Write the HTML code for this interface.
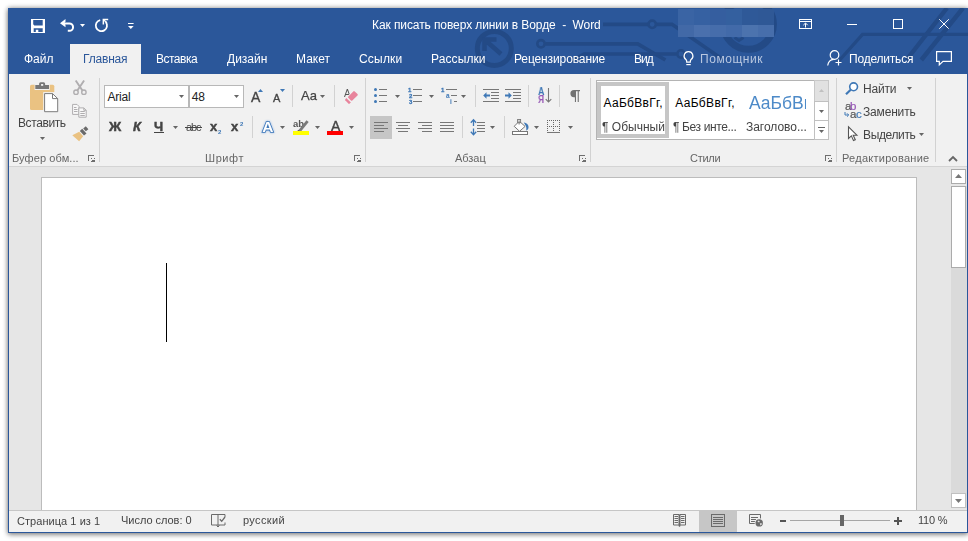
<!DOCTYPE html>
<html lang="ru"><head><meta charset="utf-8"><title>Как писать поверх линии в Ворде - Word</title>
<style>
*{box-sizing:border-box;margin:0;padding:0}
html,body{width:968px;height:541px;overflow:hidden;background:#fff}
body{position:relative;font:12px/16px "Liberation Sans",sans-serif;color:#444}
#app,#app div,#app section,#app header,#app footer,#app nav,#app main{position:absolute}
#app{left:0;top:0;width:968px;height:541px}
#frame{left:8px;top:8px;width:960px;height:525px;background:#f1f1f1;box-shadow:0 0 5px rgba(0,0,0,.4),0 2px 5px rgba(0,0,0,.3)}
.t{position:absolute;white-space:pre;display:block;will-change:transform}
.lcd{will-change:auto}
.i{position:absolute;display:block;overflow:visible}
.sep{width:1px;background:#d2d2d2}
</style></head>
<body><div id="app">
<div id="frame"></div>
<header id="titlebar" style="left:0;top:0;width:968px;height:74px">
<div class="bluebar" style="position:absolute;left:8px;top:8px;width:960px;height:66px;background:#2b579a;"></div>
<svg class="i" style="left:8px;top:8px;overflow:hidden" width="960" height="66" viewBox="8 8 960 66"><circle cx="494.300" cy="48.400" r="17" fill="none" stroke="#234a86" stroke-width="5"/><path d="M485 40l16 14M484.500 51V39.500h12" fill="none" stroke="#234a86" stroke-width="4.500"/><circle cx="541" cy="43.800" r="3.700" fill="none" stroke="#234a86" stroke-width="2.600"/><path d="M545.500 43.800H637.700L665.400 60" fill="none" stroke="#234a86" stroke-width="3.700"/><path d="M603 24.300H648M656.500 24.300H672L722 59" fill="none" stroke="#234a86" stroke-width="3.700"/><circle cx="652.200" cy="24.300" r="3.700" fill="none" stroke="#234a86" stroke-width="2.600"/><path d="M572 61l12-7H676.500" fill="none" stroke="#234a86" stroke-width="3.500"/><circle cx="681" cy="54" r="3.700" fill="none" stroke="#234a86" stroke-width="2.600"/><circle cx="748.400" cy="24.300" r="25" fill="none" stroke="#234a86" stroke-width="7"/><path d="M734.500 37.500l4.500 3 4.500-3" fill="none" stroke="#234a86" stroke-width="3"/><path d="M968 34.400H862.500L838 62" fill="none" stroke="#234a86" stroke-width="3.300"/><path d="M947 8L906.400 60M963 8L921.300 60" fill="none" stroke="#234a86" stroke-width="4.400"/></svg>
<div style="position:absolute;left:678px;top:9px;width:16px;height:16px;background:#3a64a4;"></div>
<div style="position:absolute;left:678px;top:25px;width:16px;height:12px;background:#4269a7;"></div>
<div style="position:absolute;left:694px;top:9px;width:16px;height:16px;background:#3661a2;"></div>
<div style="position:absolute;left:694px;top:25px;width:16px;height:12px;background:#4a70ad;"></div>
<div style="position:absolute;left:710px;top:9px;width:16px;height:16px;background:#355e9f;"></div>
<div style="position:absolute;left:710px;top:25px;width:16px;height:12px;background:#466dab;"></div>
<div style="position:absolute;left:726px;top:9px;width:16px;height:16px;background:#34609f;"></div>
<div style="position:absolute;left:726px;top:25px;width:16px;height:12px;background:#426aa9;"></div>
<div style="position:absolute;left:742px;top:9px;width:16px;height:16px;background:#2f5998;"></div>
<div style="position:absolute;left:742px;top:25px;width:16px;height:12px;background:#4c73ae;"></div>
<div style="position:absolute;left:758px;top:9px;width:16px;height:16px;background:#2f5896;"></div>
<div style="position:absolute;left:758px;top:25px;width:16px;height:12px;background:#476eab;"></div>
<svg class="i" style="left:31px;top:19px" width="14" height="14" viewBox="0 0 14 14"><path fill-rule="evenodd" fill="#fff" d="M0 0h14v14H0zM2.200 .9v4.300l1.100 1.300h8.400V.9zM2.700 9.200v3.900h2.100v-2.400h2.500v2.400h4.400V9.200z"/></svg>
<svg class="i" style="left:60px;top:18px" width="15" height="15" viewBox="0 0 15 15"><path d="M3 5.500H9.400A3.650 3.650 0 0 1 9.400 12.800H7.800" fill="none" stroke="#fff" stroke-width="2"/><path d="M0 5.200L5.500 1.100v2.600L4.200 5.200l1.300 1.500v2.600z" fill="#fff"/></svg>
<svg class="i" style="left:80px;top:24px" width="5" height="3" viewBox="0 0 5 3"><path d="M0 0h5L2.5 3z" fill="#fff"/></svg>
<svg class="i" style="left:95px;top:18px" width="14" height="15" viewBox="0 0 14 15"><path d="M10.700 4A5.600 5.600 0 1 1 5.200 2.100" fill="none" stroke="#fff" stroke-width="1.800"/><path d="M7.600 .8h5.600v1.500h-4.100v4.100h-1.500z" fill="#fff"/><path d="M8.500 1.800l3.500 3" stroke="#fff" stroke-width="1.300" fill="none"/></svg>
<svg class="i" style="left:127.7px;top:23px" width="6" height="6" viewBox="0 0 6 6"><rect x="0" y="0" width="5.600" height="1" fill="#fff"/><path d="M0 3h5.600L2.800 6z" fill="#fff"/></svg>
<span class="t" style="left:371.50px;top:17px;color:#fff;letter-spacing:-0.090px;">Как писать поверх линии в Ворде  -  Word</span>
<svg class="i" style="left:799px;top:19px" width="13" height="10" viewBox="0 0 13 10"><rect x=".5" y=".5" width="12" height="9" fill="none" stroke="#fff"/><rect x="1" y="2" width="11" height="1" fill="#fff"/><path d="M6.5 8.5V4.3M4.3 6.2l2.2-2.2 2.2 2.2" fill="none" stroke="#fff" stroke-width="1"/></svg>
<div style="position:absolute;left:847px;top:24px;width:10px;height:1px;background:#fff;"></div>
<svg class="i" style="left:893px;top:19px" width="10" height="10" viewBox="0 0 10 10"><rect x=".5" y=".5" width="9" height="9" fill="none" stroke="#fff"/></svg>
<svg class="i" style="left:939px;top:19px" width="10" height="10" viewBox="0 0 10 10"><path d="M.3 .3l9.400 9.400M9.700 .3L.3 9.700" stroke="#fff" stroke-width="1" fill="none"/></svg>
<div class="tab-active" style="position:absolute;left:70px;top:44px;width:71px;height:30px;background:#f1f1f1;"></div>
<span class="t" style="left:23.50px;top:51px;color:#fff;">Файл</span>
<span class="t" style="left:82.50px;top:51px;color:#2b579a;letter-spacing:-0.180px;">Главная</span>
<span class="t" style="left:155.50px;top:51px;color:#fff;letter-spacing:-0.500px;">Вставка</span>
<span class="t" style="left:226.50px;top:51px;color:#fff;">Дизайн</span>
<span class="t" style="left:295.50px;top:51px;color:#fff;">Макет</span>
<span class="t" style="left:358.50px;top:51px;color:#fff;letter-spacing:0.200px;">Ссылки</span>
<span class="t" style="left:430.50px;top:51px;color:#fff;letter-spacing:0.096px;">Рассылки</span>
<span class="t" style="left:514.00px;top:51px;color:#fff;letter-spacing:-0.115px;">Рецензирование</span>
<span class="t" style="left:633.90px;top:51px;color:#fff;letter-spacing:-1.000px;">Вид</span>
<svg class="i" style="left:683px;top:51px" width="11" height="15" viewBox="0 0 11 15"><path d="M5.5.7a4.3 4.3 0 0 0-2.6 7.8c.5.5.8 1.100.8 1.900v.8h3.600v-.8c0-.8.300-1.400.8-1.900A4.300 4.300 0 0 0 5.500.700z" fill="none" stroke="#fff" stroke-width="1.2"/><rect x="3.3" y="13" width="4.4" height="1.200" fill="#fff"/></svg>
<span class="t" style="left:700.00px;top:51px;color:#b8c7e0;letter-spacing:0.546px;">Помощник</span>
<svg class="i" style="left:827px;top:50px" width="16" height="16" viewBox="0 0 16 16"><circle cx="7.500" cy="5" r="4.300" fill="none" stroke="#fff" stroke-width="1.200"/><path d="M.7 15.500c.5-3.600 2.800-5.800 6-6.100" fill="none" stroke="#fff" stroke-width="1.200"/><path d="M11.500 9.500v6M8.500 12.500h6" stroke="#fff" stroke-width="1.200" fill="none"/></svg>
<span class="t" style="left:848.80px;top:51px;color:#fff;letter-spacing:-0.200px;">Поделиться</span>
<svg class="i" style="left:936px;top:51px" width="16" height="15" viewBox="0 0 16 15"><path d="M.6.6h14.800v9.800H7L3.300 13.900V10.400H.6z" fill="none" stroke="#fff" stroke-width="1.200"/></svg>
</header>
<main id="ribbon" style="left:9px;top:74px;width:958px;height:92px;background:#f1f1f1"></main>
<div style="position:absolute;left:9px;top:166px;width:958px;height:1px;background:#d4d4d4;"></div>
<section class="grp" id="g-clip" style="left:9px;top:74px;width:90px;height:92px"></section>
<svg class="i" style="left:29px;top:81px" width="30" height="32" viewBox="0 0 30 32"><rect x="1" y="3.700" width="24.300" height="25.300" rx="1.600" fill="#eac282"/><rect x="5.600" y="3" width="15.100" height="6" fill="#f1f1f1"/><rect x="6.300" y="4" width="13.700" height="4" fill="#777"/><rect x="10.100" y="1.200" width="6" height="4" rx="1.500" fill="#777"/><rect x="12.100" y="3" width="2.100" height="1.800" fill="#f4f4f4"/><rect x="14.200" y="11.100" width="16" height="21" fill="#f1f1f1"/><path d="M15.600 12.600h7.900l5.200 5v13.100H15.600z" fill="#fff" stroke="#7a7a7a"/><path d="M23.500 12.600v5h5.200" fill="none" stroke="#7a7a7a"/></svg>
<span class="t" style="left:17.80px;top:115px;letter-spacing:-0.405px;">Вставить</span>
<svg class="i" style="left:40px;top:137px" width="5" height="3" viewBox="0 0 5 3"><path d="M0 0h5L2.5 3z" fill="#666"/></svg>
<svg class="i" style="left:72px;top:80px" width="16" height="16" viewBox="0 0 16 16"><path d="M3.700 .5l6.900 10.300M12.100 .5L5.200 10.800" stroke="#b0aeb0" stroke-width="1.900" fill="none"/><circle cx="4" cy="12.200" r="2.200" fill="none" stroke="#b0aeb0" stroke-width="1.400"/><circle cx="11.900" cy="12.200" r="2.200" fill="none" stroke="#b0aeb0" stroke-width="1.400"/></svg>
<svg class="i" style="left:72px;top:104px" width="16" height="15" viewBox="0 0 16 15"><path d="M.6 .4h4.400l2 2v8H.6z" fill="#f8f8f8" stroke="#b0aeb0"/><path d="M2 3.500h2.500M2 5.500h3.500M2 7.500h3.500" stroke="#b0aeb0" fill="none"/><path d="M6.800 3.900h5l2.400 2.400v6.900H6.800z" fill="#f8f8f8" stroke="#b0aeb0"/><path d="M11.800 3.900v2.400h2.400" fill="none" stroke="#b0aeb0"/><path d="M8.300 7.500h4.500M8.300 9.500h4.500M8.300 11.500h4.500" stroke="#b0aeb0" fill="none"/></svg>
<svg class="i" style="left:72px;top:126px" width="17" height="16" viewBox="0 0 17 16"><path d="M.3 9.300L7.200 5.700l4 4.600L7.100 15.200z" fill="#eac282"/><path d="M7.800 4.900l2.400-2.200 4.300 4.700-2.500 2.200z" fill="#6a6a6a"/><path d="M11.200 2.400l2.600-2.100 2.600 2.900-2.600 2.100z" fill="#6a6a6a"/></svg>
<span class="t" style="left:12.10px;top:150px;font-size:11px;color:#666;letter-spacing:0.097px;">Буфер обм...</span>
<svg class="i" style="left:88px;top:155px" width="8" height="8" viewBox="0 0 8 8"><path d="M0 0h6v1H1v5H0z" fill="#6e6e6e"/><path d="M3 3h1v1h3V3H6v1H4v1h3v2H3V6h1V5H4V4H3z" fill="#6e6e6e"/></svg>
<div class="sep" style="position:absolute;left:99px;top:78px;width:1px;height:84px;background:#d2d2d2;"></div>
<section class="grp" id="g-font" style="left:100px;top:74px;width:265px;height:92px"></section>
<div class="combo" style="position:absolute;left:104px;top:85px;width:85px;height:23px;background:#fff;border:1px solid #b8b8b8"></div>
<div class="combo" style="position:absolute;left:189px;top:85px;width:55px;height:23px;background:#fff;border:1px solid #b8b8b8"></div>
<div style="position:absolute;left:188px;top:85px;width:2px;height:23px;background:#b8b8b8;"></div>
<span class="t lcd" style="left:107.60px;top:89px;color:#222;letter-spacing:-0.258px;">Arial</span>
<svg class="i" style="left:179px;top:95px" width="5" height="3" viewBox="0 0 5 3"><path d="M0 0h5L2.5 3z" fill="#666"/></svg>
<span class="t lcd" style="left:191.70px;top:89px;color:#222;">48</span>
<svg class="i" style="left:234px;top:95px" width="5" height="3" viewBox="0 0 5 3"><path d="M0 0h5L2.5 3z" fill="#666"/></svg>
<span class="t" style="left:250.90px;top:89px;font-size:14px;-webkit-text-stroke:0.35px #444;">A</span>
<svg class="i" style="left:258px;top:89px" width="5" height="3" viewBox="0 0 5 3"><path d="M0 3h5L2.500 0z" fill="#3f78b6"/></svg>
<span class="t" style="left:273.40px;top:90px;font-size:11px;-webkit-text-stroke:0.35px #444;">A</span>
<svg class="i" style="left:280px;top:89px" width="5" height="3" viewBox="0 0 5 3"><path d="M0 0h5L2.500 3z" fill="#3f78b6"/></svg>
<div class="sep" style="position:absolute;left:292px;top:85px;width:1px;height:22px;background:#d2d2d2;"></div>
<span class="t" style="left:300.50px;top:88px;font-size:13px;-webkit-text-stroke:0.25px #444;">Aa</span>
<svg class="i" style="left:320px;top:95px" width="5" height="3" viewBox="0 0 5 3"><path d="M0 0h5L2.5 3z" fill="#666"/></svg>
<div class="sep" style="position:absolute;left:334px;top:85px;width:1px;height:22px;background:#d2d2d2;"></div>
<span class="t" style="left:344.40px;top:86px;font-size:10px;color:#555;">A</span>
<svg class="i" style="left:343px;top:88px" width="17" height="17" viewBox="0 0 17 17"><path d="M11 1.800l5.200 4.900-9.900 10.200-5.300-5.400z" fill="#f1f1f1"/><path d="M10.300 3.400a1 1 0 0 1 1.400 0l2.800 2.600a1 1 0 0 1 0 1.400L9.300 12.500a1 1 0 0 1-1.400 0L5.300 9.800a1 1 0 0 1 0-1.400z" fill="#e8849c"/><path d="M3.300 10.100l4.600 4.300-1.500 1.400q-.4.300-.8 0L2.200 12.200q-.3-.4 0-.8z" fill="#e8849c"/></svg>
<span class="t" style="left:109.20px;top:119px;font-size:13.5px;font-weight:700;-webkit-text-stroke:0.45px #444;">Ж</span>
<span class="t" style="left:132.50px;top:119px;font-size:13px;font-weight:700;font-style:italic;-webkit-text-stroke:0.45px #444;">К</span>
<span class="t" style="left:154.00px;top:119px;font-size:13px;font-weight:700;-webkit-text-stroke:0.45px #444;">Ч</span>
<div style="position:absolute;left:154px;top:132px;width:10px;height:1px;background:#444;"></div>
<svg class="i" style="left:173px;top:126px" width="5" height="3" viewBox="0 0 5 3"><path d="M0 0h5L2.5 3z" fill="#666"/></svg>
<span class="t" style="left:185.70px;top:119px;font-size:11px;letter-spacing:-1.064px;">abc</span>
<div style="position:absolute;left:185px;top:127px;width:17px;height:1px;background:#444;"></div>
<span class="t" style="left:209.70px;top:119px;font-size:13px;font-weight:700;-webkit-text-stroke:0.45px #444;">x</span>
<span class="t" style="left:218.10px;top:124px;font-size:6px;font-weight:700;color:#3f78b6;">2</span>
<span class="t" style="left:231.40px;top:119px;font-size:13px;font-weight:700;-webkit-text-stroke:0.45px #444;">x</span>
<span class="t" style="left:240.30px;top:116px;font-size:6px;font-weight:700;color:#3f78b6;">2</span>
<div class="sep" style="position:absolute;left:252px;top:116px;width:1px;height:22px;background:#d2d2d2;"></div>
<svg class="i" style="left:259px;top:117px" width="18" height="18" viewBox="0 0 18 18"><text x="8.900" y="15.300" text-anchor="middle" font-family="Liberation Sans,sans-serif" font-size="15.500" font-weight="700" fill="#fff" stroke="#3c76b8" stroke-width="1.700" paint-order="stroke" style="filter:drop-shadow(0 0 .8px #8fb4e3)">A</text></svg>
<svg class="i" style="left:280px;top:126px" width="5" height="3" viewBox="0 0 5 3"><path d="M0 0h5L2.5 3z" fill="#666"/></svg>
<span class="t" style="left:293.10px;top:116px;font-size:9.5px;font-weight:700;color:#555;">ab</span>
<svg class="i" style="left:293px;top:119px" width="17" height="17" viewBox="0 0 17 17"><path d="M5.800 10.800L13.500 1.200l2.200 1.700L8 12.500z" fill="#7a7a7a"/><path d="M3.800 12.300l2-1.500 2.200 1.700z" fill="#555"/><rect x="0" y="12" width="16" height="4" fill="#ffff00"/></svg>
<svg class="i" style="left:315px;top:126px" width="5" height="3" viewBox="0 0 5 3"><path d="M0 0h5L2.5 3z" fill="#666"/></svg>
<span class="t" style="left:331.20px;top:118px;font-size:14px;-webkit-text-stroke:0.4px #444;">A</span>
<div style="position:absolute;left:327px;top:131px;width:16px;height:4px;background:#ff0000;"></div>
<svg class="i" style="left:349px;top:126px" width="5" height="3" viewBox="0 0 5 3"><path d="M0 0h5L2.5 3z" fill="#666"/></svg>
<span class="t" style="left:205.20px;top:150px;font-size:11px;color:#666;letter-spacing:0.575px;">Шрифт</span>
<svg class="i" style="left:354px;top:155px" width="8" height="8" viewBox="0 0 8 8"><path d="M0 0h6v1H1v5H0z" fill="#6e6e6e"/><path d="M3 3h1v1h3V3H6v1H4v1h3v2H3V6h1V5H4V4H3z" fill="#6e6e6e"/></svg>
<div class="sep" style="position:absolute;left:365px;top:78px;width:1px;height:84px;background:#d2d2d2;"></div>
<section class="grp" id="g-para" style="left:366px;top:74px;width:224px;height:92px"></section>
<div class="btn-on" style="position:absolute;left:370px;top:116px;width:22px;height:23px;background:#c6c6c6;"></div>
<svg class="i" style="left:0;top:0" width="968" height="170" viewBox="0 0 968 170"><circle cx="375.500" cy="89.5" r="1.500" fill="#3f78b6"/><rect x="379" y="89" width="8" height="1" fill="#777"/><circle cx="375.500" cy="95.5" r="1.500" fill="#3f78b6"/><rect x="379" y="95" width="8" height="1" fill="#777"/><circle cx="375.500" cy="101.5" r="1.500" fill="#3f78b6"/><rect x="379" y="101" width="8" height="1" fill="#777"/><rect x="413" y="89" width="9" height="1" fill="#777"/><rect x="413" y="95" width="9" height="1" fill="#777"/><rect x="413" y="101" width="9" height="1" fill="#777"/><rect x="446" y="89" width="11" height="1" fill="#777"/><rect x="451" y="95" width="6" height="1" fill="#777"/><rect x="454" y="101" width="3" height="1" fill="#777"/><rect x="483" y="89" width="16" height="1" fill="#777"/><rect x="491" y="92" width="8" height="1" fill="#777"/><rect x="491" y="95" width="8" height="1" fill="#777"/><rect x="491" y="98" width="8" height="1" fill="#777"/><rect x="483" y="101" width="16" height="1" fill="#777"/><path d="M483.200 95.500l3.300-3.300v2.300h3.500v2h-3.500v2.300z" fill="#3f78b6"/><rect x="505" y="89" width="16" height="1" fill="#777"/><rect x="513" y="92" width="8" height="1" fill="#777"/><rect x="513" y="95" width="8" height="1" fill="#777"/><rect x="513" y="98" width="8" height="1" fill="#777"/><rect x="505" y="101" width="16" height="1" fill="#777"/><path d="M511.800 95.500l-3.300-3.300v2.300h-3.500v2h3.500v2.300z" fill="#3f78b6"/><path d="M548.500 88v14M545.700 99.200l2.800 2.800 2.800-2.800" fill="none" stroke="#777" stroke-width="1.100"/><rect x="374" y="122" width="14" height="1" fill="#777"/><rect x="374" y="125" width="10" height="1" fill="#777"/><rect x="374" y="128" width="14" height="1" fill="#777"/><rect x="374" y="131" width="10" height="1" fill="#777"/><rect x="396" y="122" width="14" height="1" fill="#777"/><rect x="398" y="125" width="10" height="1" fill="#777"/><rect x="396" y="128" width="14" height="1" fill="#777"/><rect x="398" y="131" width="10" height="1" fill="#777"/><rect x="418" y="122" width="14" height="1" fill="#777"/><rect x="422" y="125" width="10" height="1" fill="#777"/><rect x="418" y="128" width="14" height="1" fill="#777"/><rect x="422" y="131" width="10" height="1" fill="#777"/><rect x="440" y="122" width="14" height="1" fill="#777"/><rect x="440" y="125" width="14" height="1" fill="#777"/><rect x="440" y="128" width="14" height="1" fill="#777"/><rect x="440" y="131" width="14" height="1" fill="#777"/><rect x="477" y="122" width="8" height="1" fill="#777"/><rect x="477" y="125" width="8" height="1" fill="#777"/><rect x="477" y="128" width="8" height="1" fill="#777"/><rect x="477" y="131" width="8" height="1" fill="#777"/><path d="M473.500 120v6M473.500 128.500v6M470.800 122.700l2.700-2.900 2.700 2.900M470.800 131.800l2.700 2.900 2.700-2.900" fill="none" stroke="#3f78b6" stroke-width="1.300"/><path d="M519.300 121.200l5.800 5.200-5.600 4.900-5.300-5z" fill="#fff" stroke="#777"/><rect x="517.600" y="119.500" width="3" height="3.200" fill="#f1f1f1" stroke="#777" stroke-width=".9"/><path d="M519.100 120.500v4" stroke="#777" fill="none"/><path d="M523.800 122.500C527.200 122.800 529.100 125.500 528.400 128.300C528.100 129.600 527.200 130.300 526.100 130.500C526.700 128.200 526.300 126.300 525.100 124.700z" fill="#3f78b6"/><rect x="512.500" y="131.500" width="15" height="3" fill="#fff" stroke="#777"/><rect x="547" y="120" width="1" height="1" fill="#666"/><rect x="547" y="126" width="1" height="1" fill="#666"/><rect x="549" y="120" width="1" height="1" fill="#666"/><rect x="549" y="126" width="1" height="1" fill="#666"/><rect x="551" y="120" width="1" height="1" fill="#666"/><rect x="551" y="126" width="1" height="1" fill="#666"/><rect x="553" y="120" width="1" height="1" fill="#666"/><rect x="553" y="126" width="1" height="1" fill="#666"/><rect x="555" y="120" width="1" height="1" fill="#666"/><rect x="555" y="126" width="1" height="1" fill="#666"/><rect x="557" y="120" width="1" height="1" fill="#666"/><rect x="557" y="126" width="1" height="1" fill="#666"/><rect x="559" y="120" width="1" height="1" fill="#666"/><rect x="559" y="126" width="1" height="1" fill="#666"/><rect x="547" y="122" width="1" height="1" fill="#666"/><rect x="553" y="122" width="1" height="1" fill="#666"/><rect x="559" y="122" width="1" height="1" fill="#666"/><rect x="547" y="124" width="1" height="1" fill="#666"/><rect x="553" y="124" width="1" height="1" fill="#666"/><rect x="559" y="124" width="1" height="1" fill="#666"/><rect x="547" y="126" width="1" height="1" fill="#666"/><rect x="553" y="126" width="1" height="1" fill="#666"/><rect x="559" y="126" width="1" height="1" fill="#666"/><rect x="547" y="128" width="1" height="1" fill="#666"/><rect x="553" y="128" width="1" height="1" fill="#666"/><rect x="559" y="128" width="1" height="1" fill="#666"/><rect x="547" y="130" width="1" height="1" fill="#666"/><rect x="553" y="130" width="1" height="1" fill="#666"/><rect x="559" y="130" width="1" height="1" fill="#666"/><rect x="547" y="132" width="13" height="1" fill="#777"/></svg>
<svg class="i" style="left:395px;top:95px" width="5" height="3" viewBox="0 0 5 3"><path d="M0 0h5L2.5 3z" fill="#666"/></svg>
<svg class="i" style="left:429px;top:95px" width="5" height="3" viewBox="0 0 5 3"><path d="M0 0h5L2.5 3z" fill="#666"/></svg>
<svg class="i" style="left:461px;top:95px" width="5" height="3" viewBox="0 0 5 3"><path d="M0 0h5L2.5 3z" fill="#666"/></svg>
<span class="t" style="left:407.50px;top:82px;font-size:6px;font-weight:700;color:#3f78b6;-webkit-text-stroke:0.3px #3f78b6;">1</span>
<span class="t" style="left:408.50px;top:88px;font-size:6px;font-weight:700;color:#3f78b6;-webkit-text-stroke:0.3px #3f78b6;">2</span>
<span class="t" style="left:408.50px;top:94px;font-size:6px;font-weight:700;color:#3f78b6;-webkit-text-stroke:0.3px #3f78b6;">3</span>
<span class="t" style="left:440.50px;top:82px;font-size:6px;font-weight:700;color:#3f78b6;-webkit-text-stroke:0.3px #3f78b6;">1</span>
<span class="t" style="left:445.50px;top:88px;font-size:6.5px;font-weight:700;color:#3f78b6;">a</span>
<span class="t" style="left:450.00px;top:94px;font-size:6.5px;font-weight:700;color:#3f78b6;">i</span>
<div class="sep" style="position:absolute;left:475px;top:85px;width:1px;height:22px;background:#d2d2d2;"></div>
<div class="sep" style="position:absolute;left:528px;top:85px;width:1px;height:22px;background:#d2d2d2;"></div>
<div class="sep" style="position:absolute;left:559px;top:85px;width:1px;height:22px;background:#d2d2d2;"></div>
<span class="t" style="left:537.90px;top:83px;font-size:10.5px;font-weight:700;color:#3f78b6;transform:scaleX(.84);transform-origin:0 0;">А</span>
<span class="t" style="left:537.70px;top:91px;font-size:10.5px;font-weight:700;color:#9556b5;transform:scaleX(.8);transform-origin:0 0;">Я</span>
<svg class="i" style="left:570px;top:90px" width="10" height="12" viewBox="0 0 10 12"><path d="M4.500 0H10v1.200H8.800V12H7.700V1.200H6V12H4.900V7.200H4A3.600 3.600 0 0 1 4 0z" fill="#727272"/></svg>
<div class="sep" style="position:absolute;left:462px;top:116px;width:1px;height:22px;background:#d2d2d2;"></div>
<div class="sep" style="position:absolute;left:504px;top:116px;width:1px;height:22px;background:#d2d2d2;"></div>
<svg class="i" style="left:490px;top:126px" width="5" height="3" viewBox="0 0 5 3"><path d="M0 0h5L2.5 3z" fill="#666"/></svg>
<svg class="i" style="left:534px;top:126px" width="5" height="3" viewBox="0 0 5 3"><path d="M0 0h5L2.5 3z" fill="#666"/></svg>
<svg class="i" style="left:568px;top:126px" width="5" height="3" viewBox="0 0 5 3"><path d="M0 0h5L2.5 3z" fill="#666"/></svg>
<span class="t" style="left:454.80px;top:150px;font-size:11px;color:#666;letter-spacing:-0.025px;">Абзац</span>
<svg class="i" style="left:579px;top:155px" width="8" height="8" viewBox="0 0 8 8"><path d="M0 0h6v1H1v5H0z" fill="#6e6e6e"/><path d="M3 3h1v1h3V3H6v1H4v1h3v2H3V6h1V5H4V4H3z" fill="#6e6e6e"/></svg>
<div class="sep" style="position:absolute;left:590px;top:78px;width:1px;height:84px;background:#d2d2d2;"></div>
<section class="grp" id="g-styles" style="left:591px;top:74px;width:245px;height:92px"></section>
<div class="gallery" style="position:absolute;left:596px;top:80px;width:233px;height:60px;background:#fff;border:1px solid #b4b4b4"></div>
<div class="style-on" style="position:absolute;left:597px;top:82px;width:72px;height:56px;background:#fff;border:4px solid #c6c6c6"></div>
<span class="t lcd" style="left:603.50px;top:95px;color:#000;letter-spacing:0.287px;">АаБбВвГг,</span>
<span class="t" style="left:601.90px;top:119px;letter-spacing:0.013px;">¶ Обычный</span>
<span class="t lcd" style="left:675.20px;top:95px;color:#000;letter-spacing:0.325px;">АаБбВвГг,</span>
<span class="t" style="left:673.40px;top:119px;letter-spacing:-0.375px;">¶ Без инте...</span>
<div style="left:745px;top:88px;width:61px;height:26px;overflow:hidden">
<span class="t" style="left:3.50px;top:3px;font-size:17.5px;line-height:24px;color:#4d8ac8;">АаБбВв</span>
</div>
<span class="t" style="left:745.50px;top:119px;letter-spacing:-0.033px;">Заголово...</span>
<div style="position:absolute;left:814px;top:80px;width:15px;height:22px;background:#e1e1e1;border:1px solid #c8c8c8"></div>
<div style="position:absolute;left:814px;top:101px;width:15px;height:20px;background:#fff;border:1px solid #c0c0c0"></div>
<div style="position:absolute;left:814px;top:120px;width:15px;height:20px;background:#fff;border:1px solid #c0c0c0"></div>
<svg class="i" style="left:819px;top:89px" width="5" height="3" viewBox="0 0 5 3"><path d="M0 3h5L2.500 0z" fill="#c0c0c0"/></svg>
<svg class="i" style="left:819px;top:110px" width="5" height="3" viewBox="0 0 5 3"><path d="M0 0h5L2.5 3z" fill="#666"/></svg>
<div style="position:absolute;left:818px;top:127px;width:7px;height:1px;background:#666;"></div>
<svg class="i" style="left:819px;top:130px" width="5" height="3" viewBox="0 0 5 3"><path d="M0 0h5L2.5 3z" fill="#666"/></svg>
<span class="t" style="left:690.00px;top:150px;font-size:11px;color:#666;letter-spacing:-0.275px;">Стили</span>
<svg class="i" style="left:825px;top:155px" width="8" height="8" viewBox="0 0 8 8"><path d="M0 0h6v1H1v5H0z" fill="#6e6e6e"/><path d="M3 3h1v1h3V3H6v1H4v1h3v2H3V6h1V5H4V4H3z" fill="#6e6e6e"/></svg>
<div class="sep" style="position:absolute;left:836px;top:78px;width:1px;height:84px;background:#d2d2d2;"></div>
<section class="grp" id="g-edit" style="left:837px;top:74px;width:98px;height:92px"></section>
<svg class="i" style="left:845px;top:82px" width="14" height="13" viewBox="0 0 14 13"><circle cx="8.600" cy="4.800" r="3.900" fill="#fff" stroke="#3f78b6" stroke-width="1.600"/><path d="M5.700 7.700L1 12.200" stroke="#3f78b6" stroke-width="2.200" fill="none"/></svg>
<span class="t" style="left:863.10px;top:81px;letter-spacing:-0.205px;">Найти</span>
<svg class="i" style="left:907px;top:87px" width="5" height="3" viewBox="0 0 5 3"><path d="M0 0h5L2.5 3z" fill="#666"/></svg>
<span class="t" style="left:844.50px;top:98px;font-size:11.5px;color:#555;-webkit-text-stroke:0.2px #555;">a</span>
<span class="t" style="left:849.60px;top:98px;font-size:11.5px;color:#9556b5;-webkit-text-stroke:0.2px #9556b5;">b</span>
<span class="t" style="left:849.50px;top:106px;font-size:11.5px;color:#555;-webkit-text-stroke:0.2px #555;">a</span>
<span class="t" style="left:855.60px;top:106px;font-size:11.5px;color:#3f78b6;-webkit-text-stroke:0.2px #3f78b6;">c</span>
<svg class="i" style="left:844px;top:112px" width="5" height="5" viewBox="0 0 5 5"><path d="M1 0v3h3.500M3 1.300l1.700 1.700-1.700 1.700" fill="none" stroke="#3f78b6"/></svg>
<span class="t" style="left:863.12px;top:104px;letter-spacing:-0.171px;">Заменить</span>
<svg class="i" style="left:847px;top:126px" width="11" height="16" viewBox="0 0 11 16"><path d="M1.500 .9v11.600l2.900-2.600 2.100 4.700 1.800-.8-2.100-4.600h3.700z" fill="#fff" stroke="#555" stroke-width="1.100"/></svg>
<span class="t" style="left:863.10px;top:127px;letter-spacing:-0.371px;">Выделить</span>
<svg class="i" style="left:919px;top:133px" width="5" height="3" viewBox="0 0 5 3"><path d="M0 0h5L2.5 3z" fill="#666"/></svg>
<span class="t" style="left:842.10px;top:150px;font-size:11px;color:#666;letter-spacing:0.261px;">Редактирование</span>
<div class="sep" style="position:absolute;left:935px;top:78px;width:1px;height:84px;background:#d2d2d2;"></div>
<svg class="i" style="left:948px;top:155px" width="10" height="7" viewBox="0 0 10 7"><path d="M1 6l4-4 4 4" fill="none" stroke="#666" stroke-width="1.800"/></svg>
<main id="doc" style="left:9px;top:167px;width:958px;height:343px;background:#e6e6e6"></main>
<div class="page" style="position:absolute;left:41px;top:177px;width:876px;height:333px;background:#fff;border:1px solid #bcbcbc;border-bottom:0"></div>
<div class="caret" style="position:absolute;left:166px;top:263px;width:1px;height:79px;background:#000;"></div>
<div class="vscroll" style="position:absolute;left:951px;top:167px;width:16px;height:343px;background:#dadada;"></div>
<div style="position:absolute;left:951px;top:167px;width:16px;height:19px;background:#e6e6e6;"></div>
<div style="position:absolute;left:951px;top:169px;width:15px;height:15px;background:#fff;border:1px solid #ababab"></div>
<svg class="i" style="left:955px;top:174px" width="7" height="4" viewBox="0 0 7 4"><path d="M0 4h7L3.500 0z" fill="#777"/></svg>
<div class="thumb" style="position:absolute;left:951px;top:186px;width:15px;height:82px;background:#fff;border:1px solid #ababab"></div>
<div style="position:absolute;left:951px;top:493px;width:15px;height:15px;background:#fff;border:1px solid #c0c0c0"></div>
<div style="position:absolute;left:951px;top:508px;width:16px;height:2px;background:#e6e6e6;"></div>
<svg class="i" style="left:955px;top:499px" width="7" height="4" viewBox="0 0 7 4"><path d="M0 0h7L3.500 4z" fill="#777"/></svg>
<footer id="status" style="left:9px;top:510px;width:958px;height:22px;background:#f1f1f1;border-top:1px solid #c6c6c6"></footer>
<span class="t" style="left:17.00px;top:513px;font-size:11px;letter-spacing:0.050px;">Страница 1 из 1</span>
<span class="t" style="left:121.20px;top:512px;font-size:11px;letter-spacing:-0.027px;">Число слов: 0</span>
<svg class="i" style="left:211px;top:514px" width="15" height="14" viewBox="0 0 15 14"><path d="M.5 .5h6.500v10.500H.5zM7 .5h7v2.500M7 11h7V8.500" fill="none" stroke="#6a6a6a"/><path d="M7 11v1.500M5.500 11.500L7 13l1.500-1.500" fill="none" stroke="#6a6a6a"/><path d="M8.800 5.300l1.900 2 3.300-4.300" fill="none" stroke="#6a6a6a" stroke-width="1.300"/></svg>
<span class="t" style="left:243.10px;top:512px;font-size:11px;letter-spacing:0.350px;">русский</span>
<div class="btn-on" style="position:absolute;left:699px;top:511px;width:38px;height:21px;background:#c6c6c6;"></div>
<svg class="i" style="left:673px;top:514px" width="13" height="14" viewBox="0 0 13 14"><path d="M.5 .5h5.500v10.500H.5zM7 .5h5.500v10.500H7zM6.500 .5v11.500" fill="none" stroke="#6a6a6a"/><path d="M1.500 2.500h3.500M1.500 4.500h3.500M1.500 6.500h3.500M1.500 8.500h3.500M8 2.500h3.500M8 4.500h3.500M8 6.500h3.500M8 8.500h3.500" stroke="#6a6a6a" fill="none"/><path d="M5 11.500L6.500 13 8 11.500z" fill="#6a6a6a"/></svg>
<svg class="i" style="left:711px;top:514px" width="14" height="13" viewBox="0 0 14 13"><rect x=".5" y=".5" width="13" height="12" fill="none" stroke="#6a6a6a"/><path d="M2 3.500h10M2 5.500h10M2 7.500h10M2 9.500h10" stroke="#6a6a6a" fill="none"/></svg>
<svg class="i" style="left:749px;top:514px" width="14" height="14" viewBox="0 0 14 14"><path d="M.5 .5h11v9H.5z" fill="none" stroke="#6a6a6a"/><path d="M2 3.500h7M2 5.500h5M2 7.500h4" stroke="#6a6a6a" fill="none"/><circle cx="10.200" cy="8.900" r="4.600" fill="#f1f1f1"/><circle cx="10.200" cy="8.900" r="3.700" fill="#6a6a6a"/><path d="M8.300 7.600l1.500-1 1 .8-.8 1.200zM10.800 9.600l1.700-.6.300 1.400-1.300 1z" fill="#e4e4e4"/></svg>
<div style="position:absolute;left:780px;top:520px;width:6px;height:2px;background:#555;"></div>
<div style="position:absolute;left:790px;top:520px;width:100px;height:1px;background:#a6a6a6;"></div>
<div style="position:absolute;left:840px;top:515px;width:4px;height:11px;background:#666;"></div>
<div style="position:absolute;left:894px;top:520px;width:8px;height:2px;background:#555;"></div>
<div style="position:absolute;left:897px;top:517px;width:2px;height:8px;background:#555;"></div>
<span class="t" style="left:918.20px;top:512px;font-size:11px;letter-spacing:-0.200px;">110 %</span>
<div style="position:absolute;left:8px;top:74px;width:1px;height:459px;background:#2b579a;"></div>
<div style="position:absolute;left:967px;top:74px;width:1px;height:459px;background:#2b579a;"></div>
<div style="position:absolute;left:8px;top:532px;width:960px;height:1px;background:#2b579a;"></div>
</div></body></html>
